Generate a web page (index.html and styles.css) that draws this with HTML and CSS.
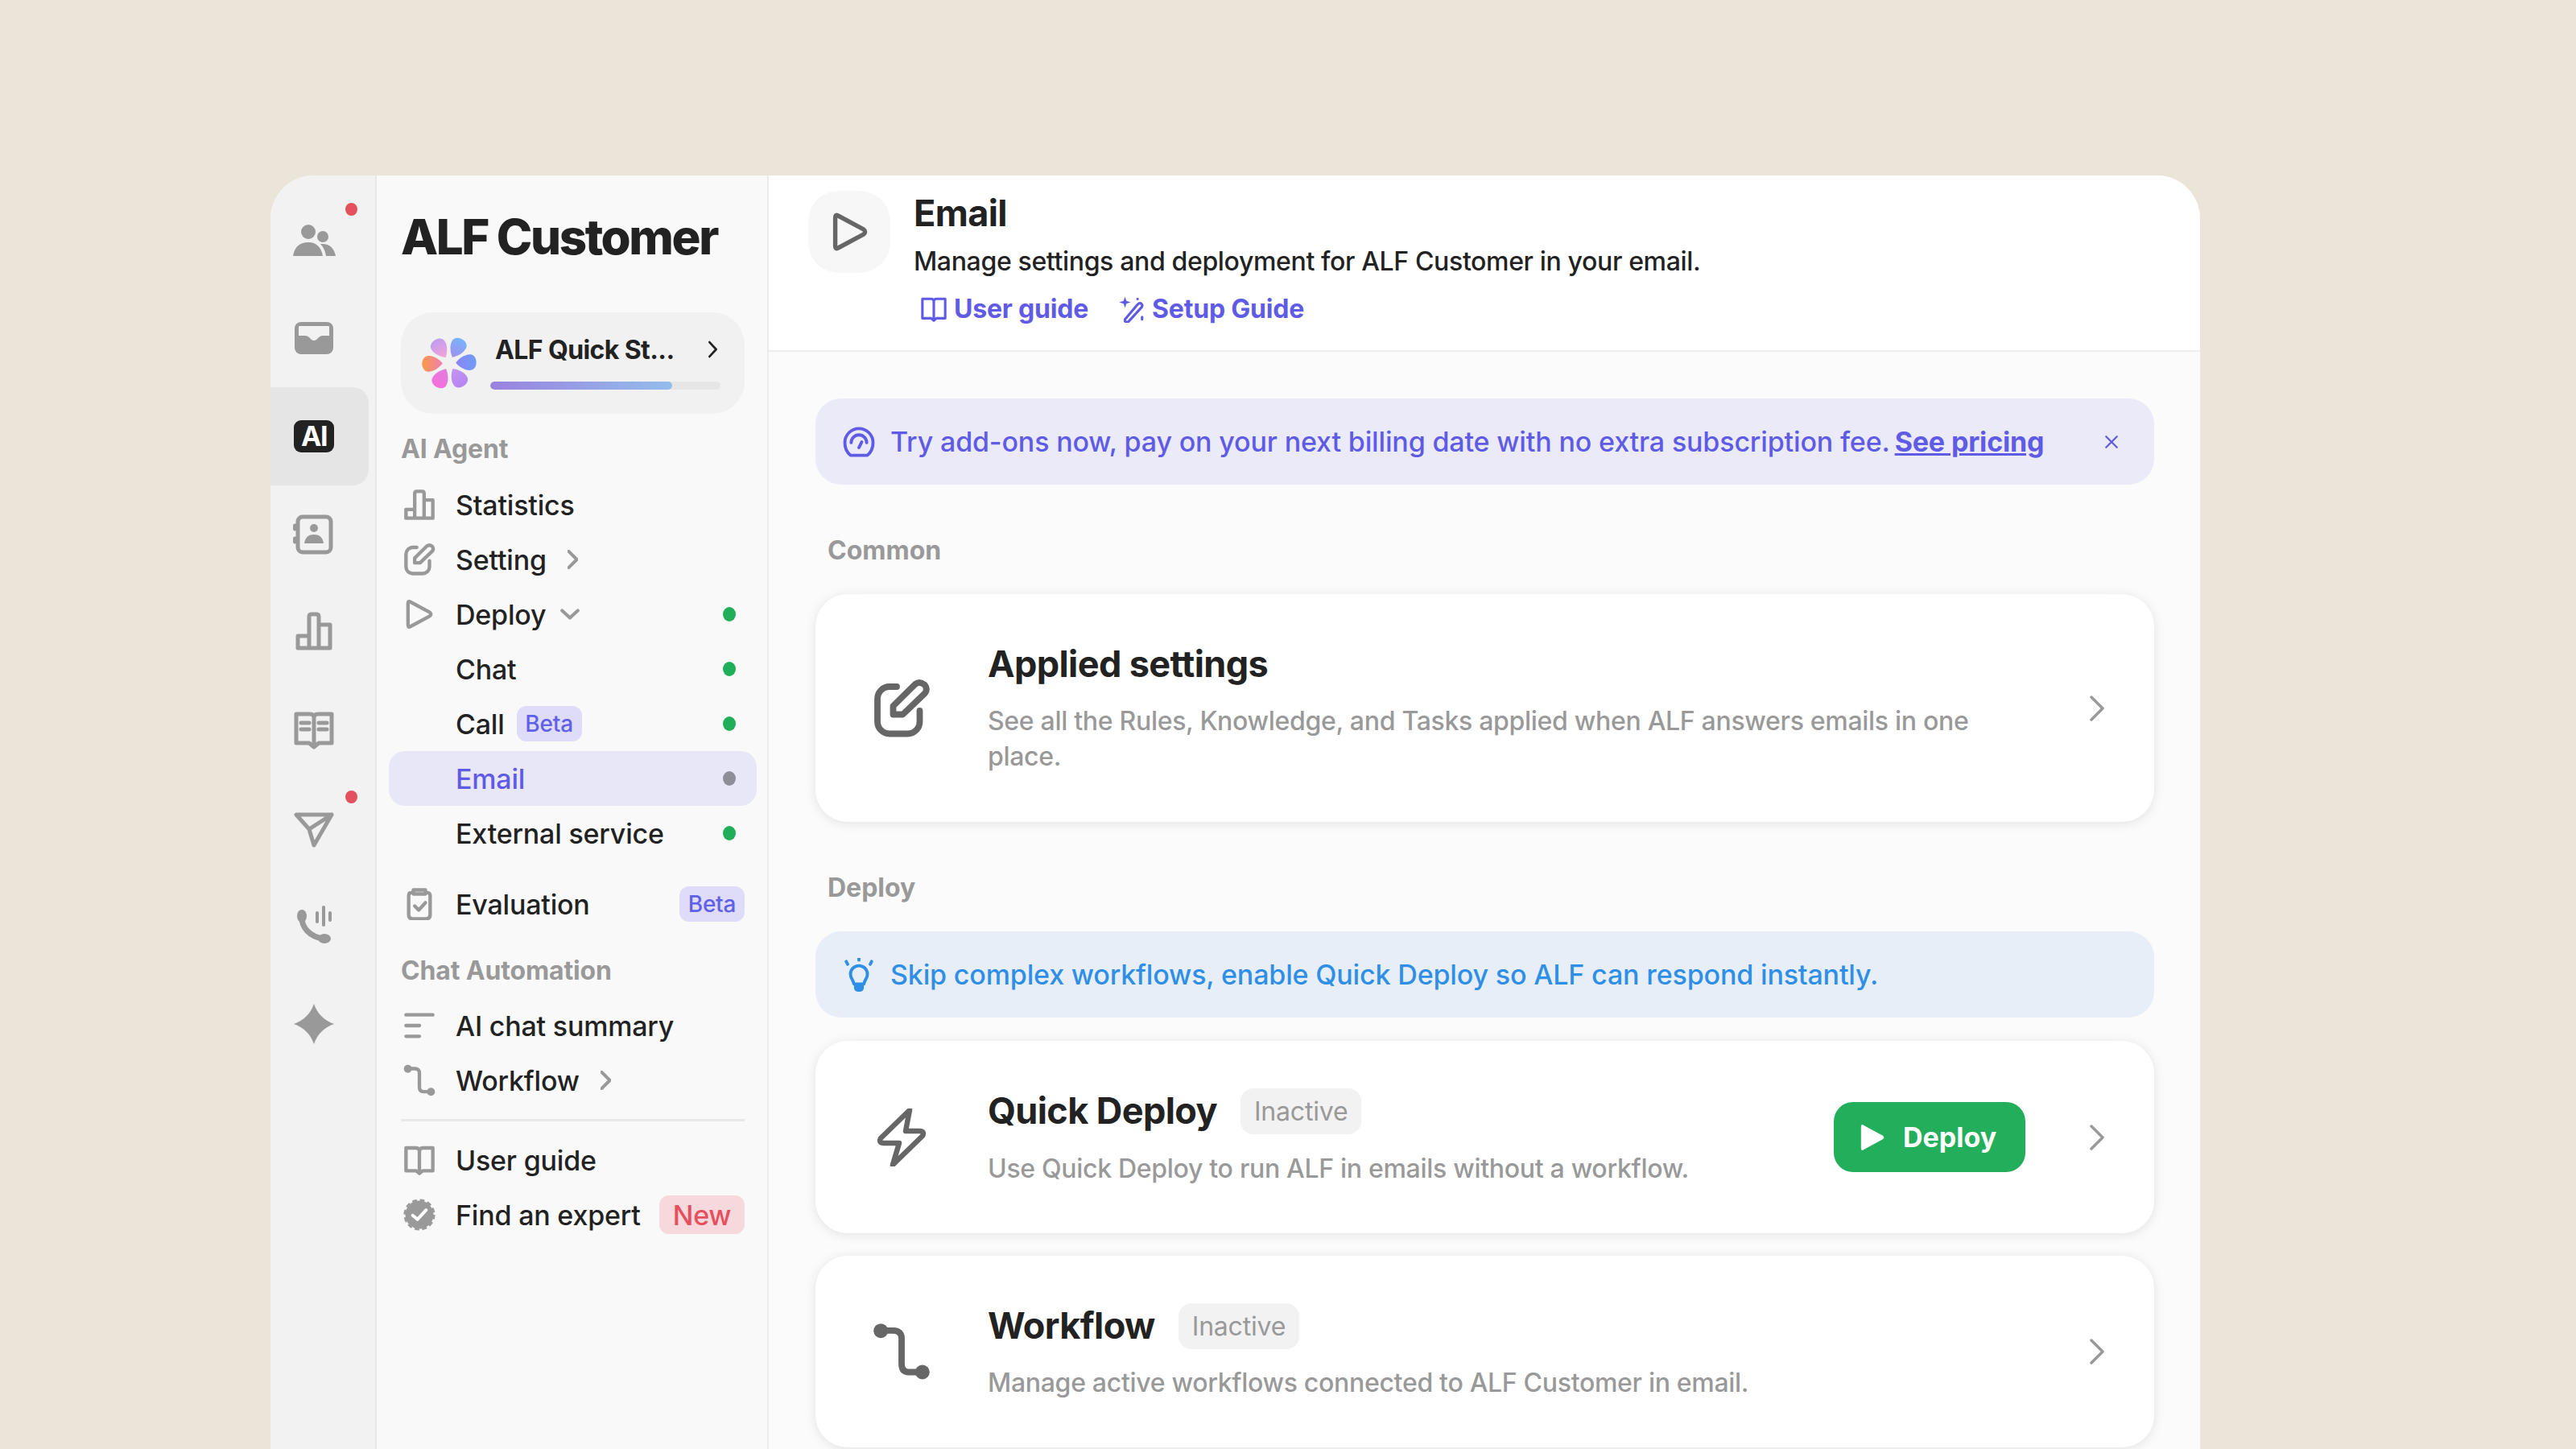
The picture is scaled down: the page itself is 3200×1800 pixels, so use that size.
FILE: index.html
```html
<!DOCTYPE html>
<html lang="en">
<head>
    <meta charset="UTF-8">
    <title>ALF Customer - Email</title>
    <link rel="stylesheet" href="styles.css">
</head>
<body>
    <svg class="sprite" xmlns="http://www.w3.org/2000/svg">
        <symbol id="i-bars" viewBox="0 0 24 24"><path d="M2 22V15.500H8.500V22ZM8.500 22V3.500Q8.500 2 10 2H14Q15.500 2 15.500 3.500V22ZM15.500 22V8.500H22V22ZM2 22H22"/></symbol>
        <symbol id="i-edit" viewBox="0 0 24 24"><path d="M10 3H7A5 5 0 0 0 2 8V17.500A5 5 0 0 0 7 22.500H14.500A5 5 0 0 0 19.500 17.500V13"/><path d="M8.500 14.500V11L17.600 2Q19.500 .6 21.500 2.200Q23 4 21.600 5.800L12.500 14.500Z"/></symbol>
        <symbol id="i-play" viewBox="0 0 24 24"><path d="M3.500 4Q3.500 1.500 5.600 3L19.700 10.600Q21.500 12 19.700 13.400L5.600 21Q3.500 22.500 3.500 20Z"/></symbol>
        <symbol id="i-clip" viewBox="0 0 24 24"><path d="M7 3.500H6Q4 3.500 4 6V20Q4 23 7 23H17Q20 23 20 20V6Q20 3.500 18 3.500H17"/><path d="M7.500 1.500H16.500V4.500H7.500Z"/><path d="M8.500 13.500L11.500 16.500L16.500 11"/></symbol>
        <symbol id="i-lines" viewBox="0 0 24 24"><path d="M2 4H22M2 12H12M2 20H12"/></symbol>
        <symbol id="i-flow" viewBox="0 0 24 24"><path d="M3.300 3.300H8.500Q12 3.300 12 6.500V17Q12 20.500 15 20.500H20.700"/><circle class="solid" cx="3.400" cy="3.400" r="3"/><circle class="solid" cx="20.600" cy="20.500" r="3"/></symbol>
        <symbol id="i-book" viewBox="0 0 24 24"><path d="M2 3H9.500Q12 3 12 5.500Q12 3 14.500 3H22V20H14.500L12 22L9.500 20H2ZM12 5.500V20"/></symbol>
        <symbol id="i-bolt" viewBox="0 0 72 72"><path d="M46 2L10 37Q7 43 14 43H33L25 70L62 34Q65 28 58 28H41Z"/></symbol>
        <symbol id="i-next" viewBox="0 0 18 32"><path d="M2 2L16 16L2 30"/></symbol>
    </svg>

    <div class="window">
        <nav class="rail">
            <a class="rail-item has-dot">
                <svg class="rail-icon" viewBox="0 0 50 50"><circle cx="18" cy="14" r="9"/><path d="M-1 44C1 32 8 27 18 27C28 27 34 33 36 44Z"/><circle cx="36" cy="20" r="7"/><path d="M33 29C44 28 50 34 52 44H40C39 38 37 33 33 29Z"/></svg>
            </a>
            <a class="rail-item">
                <svg class="rail-icon" viewBox="0 0 50 50"><rect x="1" y="5" width="48" height="40" rx="8"/><path class="cut" d="M7 10H43Q44 10 44 11V22H36Q33 22 31 24L28 27Q25 29 22 27L19 24Q17 22 14 22H6V11Q6 10 7 10Z"/></svg>
            </a>
            <a class="rail-item active"><span class="ai-mark">AI</span></a>
            <a class="rail-item">
                <svg class="rail-icon" viewBox="0 0 50 50"><rect class="line" x="5" y="3" width="41" height="44" rx="6"/><path class="line" d="M1.500 14V18M1.500 30V34"/><circle cx="25" cy="17" r="5"/><path d="M13 36C14 28 19 25 25 25C31 25 36 28 37 36Z"/></svg>
            </a>
            <a class="rail-item">
                <svg class="rail-icon" viewBox="0 0 50 50"><path class="line" d="M5 45V30H19V45ZM19 45V6Q19 3 22 3H28Q31 3 31 6V45ZM31 45V16H45V45ZM5 45H45"/></svg>
            </a>
            <a class="rail-item">
                <svg class="rail-icon" viewBox="0 0 50 50"><path class="line" d="M3 5H20Q25 5 25 9Q25 5 30 5H47V41H31L25 46L19 41H3ZM25 9V41"/><path class="line" d="M9 16H19M9 24H19M31 16H41M31 24H41"/></svg>
            </a>
            <a class="rail-item has-dot">
                <svg class="rail-icon plane" viewBox="0 0 50 50"><path class="line" d="M3 6H47L25 44L19 24ZM19 24L47 6"/></svg>
            </a>
            <a class="rail-item">
                <svg class="rail-icon" viewBox="0 0 50 50"><path class="line wide" d="M10 13C9 27 20 39 37 41"/><ellipse cx="10" cy="13" rx="6" ry="8"/><ellipse cx="38" cy="41" rx="8" ry="6"/><path class="line thin" d="M29 9V20M37 2V24M45 9V18"/></svg>
            </a>
            <a class="rail-item">
                <svg class="rail-icon" viewBox="0 0 50 50"><path d="M25 0C29 12 38 21 50 25C38 29 29 38 25 50C21 38 12 29 0 25C12 21 21 12 25 0Z"/></svg>
            </a>
        </nav>

        <aside class="sidebar">
            <h1 class="app-name">ALF Customer</h1>

            <div class="quick-start">
                <svg class="flower" viewBox="0 0 72 72">
                    <defs>
                        <linearGradient id="p1" x1="0" y1="0" x2="0" y2="1"><stop offset="0" stop-color="#be9df2"/><stop offset="1" stop-color="#f5a3d8"/></linearGradient>
                        <linearGradient id="p2" x1="0" y1="0" x2="0" y2="1"><stop offset="0" stop-color="#78b4f8"/><stop offset="1" stop-color="#a08ff2"/></linearGradient>
                        <linearGradient id="p3" x1="0" y1="0" x2="0" y2="1"><stop offset="0" stop-color="#6f9df8"/><stop offset="1" stop-color="#8b85f6"/></linearGradient>
                        <linearGradient id="p4" x1="0" y1="0" x2="0" y2="1"><stop offset="0" stop-color="#b586f0"/><stop offset="1" stop-color="#c493f2"/></linearGradient>
                        <linearGradient id="p5" x1="0" y1="0" x2="0" y2="1"><stop offset="0" stop-color="#f46fdc"/><stop offset="1" stop-color="#e27cdc"/></linearGradient>
                        <linearGradient id="p6" x1="0" y1="0" x2="0" y2="1"><stop offset="0" stop-color="#fb9948"/><stop offset="1" stop-color="#ee7fb0"/></linearGradient>
                    </defs>
                    <g transform="translate(36 36)">
                        <path fill="url(#p1)" transform="rotate(-32)" d="M0 -8C-5 -12 -10 -19 -9.500 -26C-8.500 -35 8.500 -35 9.500 -26C10 -19 5 -12 0 -8Z"/>
                        <path fill="url(#p2)" transform="rotate(28)" d="M0 -8C-5 -12 -10 -19 -9.500 -26C-8.500 -35 8.500 -35 9.500 -26C10 -19 5 -12 0 -8Z"/>
                        <path fill="url(#p3)" transform="rotate(88)" d="M0 -8C-5 -12 -10 -19 -9.500 -26C-8.500 -35 8.500 -35 9.500 -26C10 -19 5 -12 0 -8Z"/>
                        <path fill="url(#p4)" transform="rotate(148)" d="M0 -8C-5 -12 -10 -19 -9.500 -26C-8.500 -35 8.500 -35 9.500 -26C10 -19 5 -12 0 -8Z"/>
                        <path fill="url(#p5)" transform="rotate(208)" d="M0 -8C-5 -12 -10 -19 -9.500 -26C-8.500 -35 8.500 -35 9.500 -26C10 -19 5 -12 0 -8Z"/>
                        <path fill="url(#p6)" transform="rotate(268)" d="M0 -8C-5 -12 -10 -19 -9.500 -26C-8.500 -35 8.500 -35 9.500 -26C10 -19 5 -12 0 -8Z"/>
                    </g>
                </svg>
                <div class="quick-body">
                    <div class="quick-top">
                        <span class="quick-name">ALF Quick St...</span>
                        <svg class="ico quick-next" viewBox="0 0 18 32"><path d="M3 3L15 16L3 29"/></svg>
                    </div>
                    <div class="progress"><div class="progress-fill" style="width: 79%"></div></div>
                </div>
            </div>

            <h2 class="nav-label first">AI Agent</h2>
            <a class="nav-row"><svg class="ico nav-icon"><use href="#i-bars"/></svg>Statistics</a>
            <a class="nav-row"><svg class="ico nav-icon"><use href="#i-edit"/></svg>Setting<svg class="ico nav-next"><use href="#i-next"/></svg></a>
            <a class="nav-row"><svg class="ico nav-icon"><use href="#i-play"/></svg>Deploy<svg class="ico nav-down" viewBox="0 0 32 18"><path d="M3 3L16 15L29 3"/></svg><span class="dot on"></span></a>
            <a class="nav-row sub">Chat<span class="dot on"></span></a>
            <a class="nav-row sub">Call<span class="pill beta">Beta</span><span class="dot on"></span></a>
            <a class="nav-row sub current">Email<span class="dot off"></span></a>
            <a class="nav-row sub">External service<span class="dot on"></span></a>
            <a class="nav-row solo"><svg class="ico nav-icon"><use href="#i-clip"/></svg>Evaluation<span class="pill beta end">Beta</span></a>

            <h2 class="nav-label second">Chat Automation</h2>
            <a class="nav-row"><svg class="ico nav-icon"><use href="#i-lines"/></svg>AI chat summary</a>
            <a class="nav-row"><svg class="ico nav-icon"><use href="#i-flow"/></svg>Workflow<svg class="ico nav-next"><use href="#i-next"/></svg></a>

            <hr class="nav-rule">
            <a class="nav-row"><svg class="ico nav-icon"><use href="#i-book"/></svg>User guide</a>
            <a class="nav-row">
                <svg class="nav-icon badge-check" viewBox="0 0 24 24"><circle cx="12" cy="12" r="10.500"/><circle class="scallop" cx="12" cy="12" r="11"/><path class="tick" d="M7 12.500L10.500 15.500L17 8.500"/></svg>
                Find an expert<span class="pill new end">New</span>
            </a>
        </aside>

        <main class="main">
            <header class="page-head">
                <div class="head-icon"><svg class="ico"><use href="#i-play"/></svg></div>
                <div>
                    <h1 class="page-title">Email</h1>
                    <p class="page-desc">Manage settings and deployment for ALF Customer in your email.</p>
                    <div class="page-links">
                        <a class="page-link"><svg class="ico"><use href="#i-book"/></svg>User guide</a>
                        <a class="page-link">
                            <svg class="ico" viewBox="0 0 24 24"><path d="M6 21L17 8Q19 6 20.500 7.500Q22 9 20 11L9 23Q7 24 6 22.500Z"/><path class="solid" d="M6 1L7.200 4.800L11 6L7.200 7.200L6 11L4.800 7.200L1 6L4.800 4.800Z"/><path d="M17 3L17 3.200M21 19L21 21"/></svg>
                            Setup Guide
                        </a>
                    </div>
                </div>
            </header>

            <div class="content">
                <div class="notice violet">
                    <svg class="ico notice-icon" viewBox="0 0 24 24"><path d="M6 21.500Q2 18 2 12.500A10 10 0 0 1 22 12.500Q22 18 18 21.500Z"/><path d="M6.500 12.500A5.500 5.500 0 0 1 17.500 12.500"/><path d="M12 16L14 12"/></svg>
                    <span>Try add-ons now, pay on your next billing date with no extra subscription fee.</span>
                    <a class="notice-link">See pricing</a>
                    <svg class="ico notice-close" viewBox="0 0 16 16"><path d="M2 2L14 14M14 2L2 14"/></svg>
                </div>

                <h2 class="section-label common">Common</h2>
                <section class="card tall">
                    <svg class="ico card-icon"><use href="#i-edit"/></svg>
                    <div class="card-text">
                        <h3 class="card-title">Applied settings</h3>
                        <p class="card-desc">See all the Rules, Knowledge, and Tasks applied when ALF answers emails in one place.</p>
                    </div>
                    <svg class="ico card-next"><use href="#i-next"/></svg>
                </section>

                <h2 class="section-label deploy">Deploy</h2>
                <div class="notice blue">
                    <svg class="ico notice-icon" viewBox="0 0 24 24"><path d="M8.500 17.500C8 14.500 6 13.500 6 10.500A6 6 0 0 1 18 10.500C18 13.500 16 14.500 15.500 17.500Z" transform="translate(0 1)"/><path class="solid" d="M8.500 19H15.500V21Q15.500 24 12 24Q8.500 24 8.500 21Z"/><path d="M12 0V1.500M3 2.500L4 4.500M21 2.500L20 4.500"/></svg>
                    <span>Skip complex workflows, enable Quick Deploy so ALF can respond instantly.</span>
                </div>

                <section class="card quick">
                    <svg class="ico card-icon bolt"><use href="#i-bolt"/></svg>
                    <div class="card-text">
                        <div class="card-head"><h3 class="card-title">Quick Deploy</h3><span class="state">Inactive</span></div>
                        <p class="card-desc">Use Quick Deploy to run ALF in emails without a workflow.</p>
                    </div>
                    <button class="deploy-btn"><svg class="btn-icon"><use href="#i-play"/></svg>Deploy</button>
                    <svg class="ico card-next"><use href="#i-next"/></svg>
                </section>

                <section class="card flow">
                    <svg class="ico card-icon"><use href="#i-flow"/></svg>
                    <div class="card-text">
                        <div class="card-head"><h3 class="card-title">Workflow</h3><span class="state">Inactive</span></div>
                        <p class="card-desc">Manage active workflows connected to ALF Customer in email.</p>
                    </div>
                    <svg class="ico card-next"><use href="#i-next"/></svg>
                </section>
            </div>
        </main>
    </div>
</body>
</html>
```

FILE: styles.css
```css
html{
    box-sizing: border-box;
}
*,
*::before,
*::after{
    box-sizing: inherit;
}
body{
    margin: 0;
    height: 1800px;
    overflow: hidden;
    background-color: #ebe4d8;
    font-family: "Inter", "Liberation Sans", sans-serif;
    color: #222;
}
h1,h2,h3,p{
    margin: 0;
}
.sprite{
    display: none;
}
.ico{
    fill: none;
    stroke: currentColor;
    stroke-width: 2.600;
    stroke-linecap: round;
    stroke-linejoin: round;
}
.ico .solid,
.solid{
    fill: currentColor;
    stroke: none;
}

.window{
    display: flex;
    width: 2397px;
    height: 1582px;
    margin: 218px 0 0 336px;
    border-radius: 54px 54px 0 0;
    overflow: hidden;
    background-color: #fff;
}

/* icon rail */
.rail{
    flex: 0 0 132px;
    padding-top: 20px;
    background-color: #f2f2f2;
    border-right: 2px solid #e8e8e8;
}
.rail-item{
    position: relative;
    display: flex;
    align-items: center;
    width: 122px;
    height: 121.600px;
    padding-left: 29px;
    border-radius: 0 20px 20px 0;
}
.rail-item.active{
    background-color: #e5e5e5;
}
.rail-item.has-dot::after{
    content: "";
    position: absolute;
    left: 93px;
    top: 14px;
    width: 15px;
    height: 16px;
    border-radius: 50%;
    background-color: #e5505f;
}
.rail-icon{
    width: 50px;
    height: 50px;
    overflow: visible;
    fill: #999;
}
.rail-icon.plane{
    margin-top: 6px;
}
.rail-icon .cut{
    fill: #f2f2f2;
}
.rail-icon .line{
    fill: none;
    stroke: #999;
    stroke-width: 5;
    stroke-linecap: round;
    stroke-linejoin: round;
}
.rail-icon .wide{
    stroke-width: 7;
}
.rail-icon .thin{
    stroke-width: 4;
}
.ai-mark{
    display: flex;
    align-items: center;
    justify-content: center;
    width: 50px;
    height: 40px;
    border-radius: 9px;
    background-color: #222;
    color: #fff;
    font-size: 34px;
    font-weight: 700;
    letter-spacing: -1.500px;
}

/* sidebar */
.sidebar{
    flex: 0 0 487px;
    padding: 41px 13px 0 15px;
    background-color: #f9f9f9;
    border-right: 2px solid #ececec;
}
.app-name{
    margin-left: 15px;
    font-size: 60px;
    line-height: 70px;
    font-weight: 800;
    letter-spacing: -2.400px;
    white-space: nowrap;
}
.quick-start{
    display: flex;
    align-items: center;
    width: 427px;
    height: 126px;
    margin: 59px 0 0 15px;
    padding-left: 23px;
    border-radius: 40px;
    background-color: #f1f1f1;
}
.flower{
    flex: 0 0 74px;
    height: 74px;
}
.quick-body{
    width: 286px;
    margin-left: 14px;
    padding-bottom: 6px;
}
.quick-top{
    display: flex;
    align-items: center;
    justify-content: space-between;
    height: 44px;
    padding: 0 3px 0 6px;
}
.quick-name{
    font-size: 32px;
    font-weight: 700;
    letter-spacing: -0.600px;
    white-space: nowrap;
}
.quick-next{
    width: 13px;
    height: 22px;
    stroke-width: 4;
}
.progress{
    height: 10px;
    margin-top: 18px;
    border-radius: 5px;
    background-color: #e6e6e6;
    overflow: hidden;
}
.progress-fill{
    height: 100%;
    border-radius: 5px;
    background: linear-gradient(90deg, #9a82df, #93bdec);
}
.nav-label{
    margin-left: 15px;
    font-size: 32px;
    line-height: 40px;
    font-weight: 700;
    color: #999;
    letter-spacing: -0.150px;
}
.nav-label.first{
    margin-top: 24px;
    margin-bottom: 15px;
}
.nav-label.second{
    margin-top: 29px;
    margin-bottom: 14px;
}
.nav-row{
    display: flex;
    align-items: center;
    height: 68px;
    padding: 0 15px 0 18px;
    border-radius: 20px;
    font-size: 34px;
    font-weight: 450;
    letter-spacing: -0.200px;
    color: #222;
}
.nav-row.sub{
    padding-left: 83px;
}
.nav-row.solo{
    margin-top: 20px;
}
.nav-row.current{
    background-color: #e8e7f8;
    color: #5f5be6;
}
.nav-icon{
    flex: 0 0 40px;
    height: 40px;
    margin-right: 25px;
    color: #999;
}
.nav-next{
    width: 13px;
    height: 24px;
    margin-left: 26px;
    color: #999;
    stroke-width: 5.500;
}
.nav-down{
    width: 24px;
    height: 14px;
    margin-left: 18px;
    color: #999;
    stroke-width: 5.500;
}
.dot{
    width: 16px;
    height: 18px;
    margin: 0 11px 0 auto;
    border-radius: 50%;
}
.dot.on{
    background-color: #20ae58;
}
.dot.off{
    background-color: #8e8e99;
}
.pill{
    display: flex;
    align-items: center;
    justify-content: center;
    border-radius: 12px;
    font-size: 28px;
}
.pill.beta{
    width: 81px;
    height: 44px;
    margin-left: 15px;
    background-color: #dedcf8;
    color: #6060e8;
}
.pill.new{
    width: 106px;
    height: 48px;
    background-color: #f7d8dc;
    color: #e5505f;
    font-size: 34px;
}
.pill.end{
    margin-left: auto;
}
.nav-rule{
    height: 3px;
    margin: 14px 0 14px 15px;
    width: 427px;
    border: 0;
    background-color: #e8e8e8;
}
.badge-check{
    fill: #999;
    overflow: visible;
}
.badge-check .scallop{
    fill: none;
    stroke: #999;
    stroke-width: 1.500;
    stroke-dasharray: 3.500 2.260;
}
.badge-check .tick{
    fill: none;
    stroke: #fff;
    stroke-width: 2.400;
    stroke-linecap: round;
    stroke-linejoin: round;
}

/* main */
.main{
    flex: 1;
    min-width: 0;
    background-color: #fbfbfb;
}
.page-head{
    display: flex;
    height: 219px;
    padding: 19px 0 0 49px;
    background-color: #fff;
    border-bottom: 2px solid #eee;
}
.head-icon{
    display: flex;
    align-items: center;
    justify-content: center;
    flex: 0 0 102px;
    height: 102px;
    margin-right: 29px;
    border-radius: 38px;
    background-color: #f7f7f7;
    color: #666;
}
.head-icon svg{
    width: 52px;
    height: 52px;
    margin-left: 2px;
    stroke-width: 2.500;
}
.page-title{
    font-size: 45px;
    line-height: 56px;
    font-weight: 700;
    letter-spacing: -0.600px;
}
.page-desc{
    margin-top: 10px;
    font-size: 32px;
    line-height: 44px;
    font-weight: 450;
    letter-spacing: -0.350px;
    color: #222;
}
.page-links{
    display: flex;
    margin-top: 15px;
    padding-left: 8px;
}
.page-link{
    display: flex;
    align-items: center;
    margin-right: 37px;
    font-size: 32px;
    line-height: 44px;
    font-weight: 700;
    letter-spacing: -0.200px;
    color: #5f5be6;
}
.page-link svg{
    width: 34px;
    height: 34px;
    margin-right: 8px;
    stroke-width: 2.200;
}
.content{
    padding: 58px 57px 0 58px;
}
.notice{
    display: flex;
    align-items: center;
    height: 107px;
    padding-left: 33px;
    border-radius: 32px;
    font-size: 34px;
    font-weight: 450;
    letter-spacing: -0.150px;
}
.notice.violet{
    background-color: #eaeaf8;
    color: #5f5be6;
}
.notice.blue{
    background-color: #e7eef8;
    color: #2f8fe6;
}
.notice-icon{
    flex: 0 0 42px;
    height: 42px;
    margin-right: 18px;
    stroke-width: 2.200;
}
.notice-link{
    margin-left: 6px;
    font-weight: 700;
    text-decoration: underline;
}
.notice-close{
    width: 18px;
    height: 18px;
    margin-left: auto;
    margin-right: 44px;
    stroke-width: 2;
}
.section-label{
    margin-left: 15px;
    font-size: 32px;
    line-height: 40px;
    font-weight: 700;
    color: #999;
}
.section-label.common{
    margin-top: 62px;
    margin-bottom: 34px;
}
.section-label.deploy{
    margin-top: 62px;
    margin-bottom: 34px;
}
.card{
    display: flex;
    align-items: center;
    padding: 0 62px 0 71px;
    border-radius: 40px;
    background-color: #fff;
    box-shadow: 0 2px 14px rgba(0, 0, 0, 0.1);
}
.card.tall{
    height: 283px;
}
.card.quick{
    height: 239px;
    margin-top: 29px;
}
.card.flow{
    height: 238px;
    margin-top: 28px;
}
.card-icon{
    flex: 0 0 72px;
    height: 72px;
    margin-right: 71px;
    color: #666;
}
.card-icon.bolt{
    stroke-width: 6.500;
}
.card-text{
    flex: 1;
    min-width: 0;
    max-width: 1250px;
}
.card-head{
    display: flex;
    align-items: center;
    height: 57px;
    margin-bottom: 20px;
}
.quick .card-head{
    margin-bottom: 21px;
}
.card-title{
    font-size: 45px;
    line-height: 56px;
    font-weight: 700;
    letter-spacing: -0.600px;
}
.tall .card-title{
    margin-bottom: 21px;
}
.card-desc{
    font-size: 32px;
    line-height: 44px;
    font-weight: 450;
    letter-spacing: -0.300px;
    color: #999;
}
.state{
    display: flex;
    align-items: center;
    height: 57px;
    margin-left: 29px;
    padding: 0 17px;
    border-radius: 16px;
    background-color: #f2f2f2;
    font-size: 32px;
    letter-spacing: -0.200px;
    color: #999;
}
.deploy-btn{
    display: flex;
    align-items: center;
    width: 238px;
    height: 87px;
    margin-left: auto;
    padding: 0 0 0 28px;
    border: none;
    border-radius: 24px;
    background-color: #22ae5a;
    color: #fff;
    font-family: inherit;
    font-size: 34px;
    font-weight: 700;
}
.btn-icon{
    width: 40px;
    height: 40px;
    margin-right: 18px;
    fill: #fff;
}
.card-next{
    flex: 0 0 18px;
    height: 32px;
    margin-left: auto;
    color: #999;
    stroke-width: 3.500;
}
.deploy-btn + .card-next{
    margin-left: 80px;
}
```
